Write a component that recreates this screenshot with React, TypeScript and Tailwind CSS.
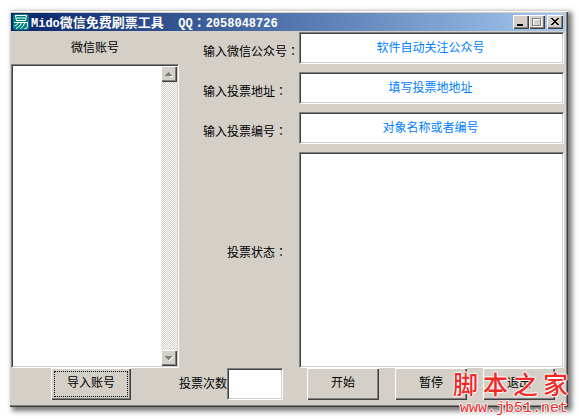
import type { ReactNode } from "react";

const FONT = "font-['Liberation_Sans','Noto_Sans_CJK_SC',sans-serif]";

const sunken =
  "border border-t-[#808080] border-l-[#808080] border-r-white border-b-white bg-white shadow-[inset_1px_1px_0_#404040,inset_-1px_-1px_0_#d4d0c8]";
const raised =
  "bg-[#d4d0c8] shadow-[inset_1px_1px_0_#fff,inset_-1px_-1px_0_#404040,inset_-2px_-2px_0_#808080]";

function Colon() {
  return <span className="font-['Noto_Sans_CJK_TC',sans-serif]">：</span>;
}

function AppIcon() {
  return (
    <svg width="16" height="16" viewBox="0 0 16 16" className="shrink-0">
      <rect width="16" height="16" rx="2" fill="#008080" />
      <path
        d="M2 1.500H13.500L12.500 6.500H3.500L2.500 1.500M4 4H12M1 8.500H14.500V12.500Q14.500 14.500 11.500 14.500M5.500 8.500Q4.500 11 1.500 12M8.500 9Q7.500 12.500 3 14.500M11.500 9Q11 12.500 7.500 14.500"
        fill="none"
        stroke="#fff"
        strokeWidth="1"
      />
    </svg>
  );
}

function WindowButton({ label, children }: { label: string; children: ReactNode }) {
  return (
    <button aria-label={label} className={`flex h-[14px] w-4 items-center justify-center ${raised}`}>
      <svg width="12" height="10" viewBox="0 0 12 10" shapeRendering="crispEdges" fill="none">
        {children}
      </svg>
    </button>
  );
}

function PushButton({ children, className = "" }: { children: ReactNode; className?: string }) {
  return <button className={`h-8 shrink-0 pb-0.5 text-xs ${raised} ${className}`}>{children}</button>;
}

const fields = [
  { id: "account", label: "输入微信公众号", value: "软件自动关注公众号" },
  { id: "address", label: "输入投票地址", value: "填写投票地地址" },
  { id: "number", label: "输入投票编号", value: "对象名称或者编号" },
];

export default function App() {
  return (
    <div className={`flex min-h-screen bg-white pt-[10px] pr-[11px] pb-3 pl-[10px] text-xs text-black ${FONT}`}>
      <main className="relative flex flex-1 flex-col bg-[#d4d0c8] pt-[3px] pr-[3px] pb-[7px] pl-px shadow-[inset_0_1px_0_#d4d0c8,inset_0_2px_0_#fff,inset_-1px_-1px_0_#404040,inset_-2px_-2px_0_#808080,3px_3px_5px_1px_#777]">
        {/* Title bar */}
        <header className="flex h-[18px] items-center bg-linear-to-r from-[#0a246a] to-[#a6caf0] pr-0.5 pl-0.5">
          <AppIcon />
          <h1 className="ml-0.5 flex-1 text-[13px] leading-[18px] font-bold whitespace-pre text-white">
            <span className="font-['Liberation_Mono',monospace] text-xs">Mido</span>
            微信免费刷票工具
            <span className="font-['Liberation_Mono',monospace] text-xs">{"  QQ"}</span>
            <Colon />
            <span className="font-['Liberation_Mono',monospace] text-xs">2058048726</span>
          </h1>
          <div className="flex">
            <WindowButton label="最小化">
              <path d="M2 8h6" stroke="#000" strokeWidth="2" />
            </WindowButton>
            <WindowButton label="最大化">
              <path d="M2 1h9v9h-9z" fill="#fff" />
              <path d="M3 3h6v5h-6z" fill="#d4d0c8" />
              <path d="M1 1h9M1.500 1v8M9.500 1v8M1 8.500h9" stroke="#808080" />
            </WindowButton>
            <span className="w-0.5" />
            <WindowButton label="关闭">
              <path d="M2 1h2v1h1v1h2v-1h1v-1h2v1h-1v1h-1v1h-1v1h1v1h1v1h1v1h-2v-1h-1v-1h-2v1h-1v1h-2v-1h1v-1h1v-1h1v-1h-1v-1h-1v-1h-1z" fill="#000" />
            </WindowButton>
          </div>
        </header>

        <div className="flex flex-1 pr-px">
          {/* Accounts */}
          <section className="flex w-[168px] flex-col">
            <h2 className="h-[33px] text-center leading-[34px]">微信账号</h2>
            <div className={`flex flex-1 p-px ${sunken}`}>
              <div className="flex-1" />
              <div className="flex w-4 flex-col justify-between bg-[repeating-conic-gradient(#fff_0_25%,#d4d0c8_0_50%)] bg-size-[2px_2px]">
                <button aria-label="向上" className={`flex h-4 items-center justify-center ${raised}`}>
                  <svg width="8" height="5" viewBox="0 0 8 5" shapeRendering="crispEdges">
                    <path d="M1 5h7v-1z" fill="#fff" />
                    <path d="M3 0h1v1h1v1h1v1h1v1H0V3h1V2h1V1h1z" fill="#808080" />
                  </svg>
                </button>
                <button aria-label="向下" className={`flex h-4 items-center justify-center ${raised}`}>
                  <svg width="8" height="5" viewBox="0 0 8 5" shapeRendering="crispEdges">
                    <path d="M8 1v1H7v1H6v1H5v1H4V4h1V3h1V2h1V1z" fill="#fff" />
                    <path d="M0 0h7v1H6v1H5v1H4v1H3V3H2V2H1V1H0z" fill="#808080" />
                  </svg>
                </button>
              </div>
            </div>
          </section>

          {/* Settings */}
          <section className="flex flex-1 flex-col gap-2 pt-px">
            {fields.map((field) => (
              <div key={field.id} className="flex h-8">
                <label htmlFor={field.id} className="w-[120px] shrink-0 pt-1.5 pl-6 leading-[26px] whitespace-nowrap">
                  {field.label}
                  <Colon />
                </label>
                <input
                  id={field.id}
                  defaultValue={field.value}
                  className={`min-w-0 flex-1 pr-0.5 text-center text-[#0080ff] ${sunken}`}
                />
              </div>
            ))}
            <div className="flex flex-1">
              <label htmlFor="status" className="w-[120px] shrink-0 self-center pb-4 pl-12">
                投票状态
                <Colon />
              </label>
              <textarea id="status" className={`min-w-0 flex-1 resize-none ${sunken}`} />
            </div>
          </section>
        </div>

        {/* Actions */}
        <footer className="flex">
          <PushButton className="ml-10 w-20 outline-1 -outline-offset-4 outline-dotted outline-black">导入账号</PushButton>
          <label htmlFor="times" className="ml-12 leading-8">
            投票次数
          </label>
          <input id="times" className={`h-8 w-14 ${sunken}`} />
          <div className="ml-6 flex flex-1 gap-4">
            <PushButton className="w-[72px]">开始</PushButton>
            <PushButton className="w-[72px]">暂停</PushButton>
            <PushButton className="w-[72px]">退出</PushButton>
          </div>
        </footer>

        {/* Site watermark */}
        <div className="pointer-events-none absolute right-0 -bottom-2 w-[115px] text-[#f02828] [text-shadow:1px_0_#fff,-1px_0_#fff,0_1px_#fff,0_-1px_#fff]">
          <div className="flex justify-between pb-1 text-[25px] leading-7 font-medium">
            <span>脚</span>
            <span>本</span>
            <span>之</span>
            <span>家</span>
          </div>
          <div className="text-right font-['Liberation_Mono',monospace] text-[15px] leading-3">www.jb51.net</div>
        </div>
      </main>
    </div>
  );
}
